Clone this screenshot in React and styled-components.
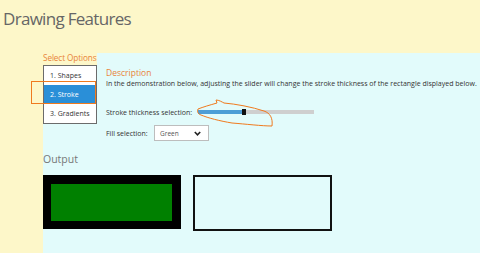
import styled, { createGlobalStyle } from 'styled-components'

const Global = createGlobalStyle`
  html, body { margin: 0; padding: 0; }
  body {
    background: #fdf7c9;
    font-family: "Open Sans", "Noto Sans", sans-serif;
    width: 480px;
    height: 253px;
    overflow: hidden;
  }
`

const Page = styled.div`
  position: relative;
  width: 480px;
  height: 253px;
`

const Header = styled.h1`
  margin: 0;
  height: 53px;
  padding: 7px 0 0 3px;
  box-sizing: border-box;
  font-size: 17px;
  font-weight: 400;
  color: #666;
  letter-spacing: -0.7px;
`

const Panel = styled.div`
  margin-left: 43px;
  height: 200px;
  background: #e2fbfb;
  display: flex;
  flex-direction: column;
`

const Legend = styled.div`
  width: 54px;
  height: 12px;
  background: #fdf7c9;
  color: #e8843a;
  font-size: 8.2px;
  line-height: 10px;
  white-space: nowrap;
  letter-spacing: -0.1px;
`

const TopRow = styled.div`
  display: flex;
  gap: 9px;
`

const Tabs = styled.div`
  width: 52px;
  border: 1px solid #6b6b6b;
  background: #fff;
  display: flex;
  flex-direction: column;
  align-self: flex-start;
`

const Tab = styled.div`
  height: 19px;
  line-height: 19px;
  font-size: 7px;
  padding-left: 6px;
  color: ${p => (p.$active ? '#fff' : '#333')};
  background: ${p => (p.$active ? '#2a8fd8' : 'transparent')};
  white-space: nowrap;
`

const Content = styled.div`
  display: flex;
  flex-direction: column;
  padding-top: 2px;
`

const SubTitle = styled.div`
  color: #e8843a;
  font-size: 8.5px;
  line-height: 11px;
`

const Text = styled.div`
  color: #333;
  font-size: 7px;
  line-height: 11px;
  white-space: nowrap;
`

const FieldRow = styled.div`
  display: flex;
  align-items: center;
  height: ${p => p.$h}px;
  margin-top: ${p => p.$mt}px;
`

const Label = styled.div`
  color: #333;
  font-size: 7px;
  width: ${p => p.$w}px;
  white-space: nowrap;
`

const Track = styled.div`
  width: 116px;
  height: 4px;
  background: #cfcfcf;
  display: flex;
  align-items: center;
`

const Fill = styled.div`
  height: 4px;
  background: #4d9ed6;
`

const Thumb = styled.div`
  width: 4px;
  height: 6px;
  background: #111;
`

const Select = styled.div`
  width: 55px;
  height: 16px;
  border: 1px solid #bdbdbd;
  background: #fff;
  display: flex;
  align-items: center;
  justify-content: space-between;
  padding: 0 7px 0 5px;
  box-sizing: border-box;
  font-size: 6.5px;
  color: #555;
`

const OutputTitle = styled.div`
  margin-top: 12px;
  color: #777;
  font-size: 10.5px;
  line-height: 12px;
`

const Canvases = styled.div`
  display: flex;
  gap: 12px;
  margin-top: 10px;
`

const Filled = styled.div`
  width: 138px;
  height: 54px;
  background: #000;
  padding: 9px 9px 8px 8px;
  box-sizing: border-box;
`

const Green = styled.div`
  width: 100%;
  height: 100%;
  background: #008000;
`

const Outline = styled.div`
  width: 139px;
  height: 56px;
  border: 2px solid #111;
  box-sizing: border-box;
`

const Highlight = styled.div`
  position: absolute;
  left: 31px;
  top: 81px;
  width: 65px;
  height: 23px;
  border: 1px solid #f07a1e;
  box-sizing: border-box;
  pointer-events: none;
`

const Scribble = styled.svg`
  position: absolute;
  left: 0;
  top: 0;
  pointer-events: none;
`

export default function App() {
  const value = 44
  return (
    <Page>
      <Global />
      <Header>Drawing Features</Header>
      <Panel>
        <Legend>Select Options</Legend>
        <TopRow>
          <Tabs>
            <Tab>1. Shapes</Tab>
            <Tab $active>2. Stroke</Tab>
            <Tab>3. Gradients</Tab>
          </Tabs>
          <Content>
            <SubTitle>Description</SubTitle>
            <Text>In the demonstration below, adjusting the slider will change the stroke thickness of the rectangle displayed below.</Text>
            <FieldRow $h={12} $mt={17}>
              <Label $w={92}>Stroke thickness selection:</Label>
              <Track>
                <Fill style={{ width: value }} />
                <Thumb />
              </Track>
            </FieldRow>
            <FieldRow $h={16} $mt={7}>
              <Label $w={48}>Fill selection:</Label>
              <Select>
                <span>Green</span>
                <svg width="7" height="5" viewBox="0 0 7 5">
                  <path d="M0.8 1 L3.5 3.8 L6.2 1" stroke="#222" strokeWidth="1.6" fill="none" />
                </svg>
              </Select>
            </FieldRow>
          </Content>
        </TopRow>
        <OutputTitle>Output</OutputTitle>
        <Canvases>
          <Filled><Green /></Filled>
          <Outline />
        </Canvases>
      </Panel>
      <Highlight />
      <Scribble width="480" height="253" viewBox="0 0 480 253">
        <path
          d="M198 109 C203 107 210 105 217 103 L216 100 C219 100 222 102 224 103 C236 104 252 107 264 111 C270 113 273 118 272 126 C262 126 245 124 232 123 C220 121 208 118 201 115 C198 114 197 112 198 109 Z"
          fill="none"
          stroke="#f07a1e"
          strokeWidth="1"
        />
      </Scribble>
    </Page>
  )
}
